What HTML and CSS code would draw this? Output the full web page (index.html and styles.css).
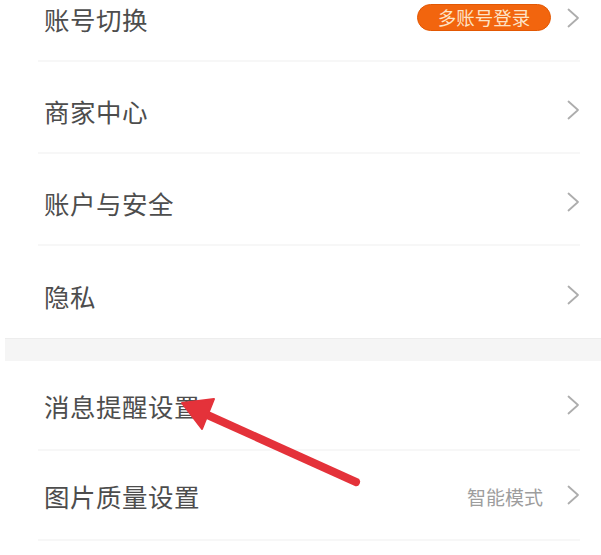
FILE: index.html
```html
<!DOCTYPE html>
<html lang="zh-CN">
<head>
<meta charset="utf-8">
<title>设置</title>
<link rel="stylesheet" href="styles.css">
</head>
<body>
<div class="page">
  <div class="settings">
    <div class="row">
      <span class="label">账号切换</span>
      <span class="badge">多账号登录</span>
      <svg class="chev" viewBox="0 0 13 20" width="13" height="20"><polyline points="1.5,1.5 11,10 1.5,18.5" /></svg>
    </div>
    <div class="row">
      <span class="label">商家中心</span>
      <svg class="chev" viewBox="0 0 13 20" width="13" height="20"><polyline points="1.5,1.5 11,10 1.5,18.5" /></svg>
    </div>
    <div class="row">
      <span class="label">账户与安全</span>
      <svg class="chev" viewBox="0 0 13 20" width="13" height="20"><polyline points="1.5,1.5 11,10 1.5,18.5" /></svg>
    </div>
    <div class="row row--last">
      <span class="label">隐私</span>
      <svg class="chev" viewBox="0 0 13 20" width="13" height="20"><polyline points="1.5,1.5 11,10 1.5,18.5" /></svg>
    </div>
  </div>
  <div class="band"></div>
  <div class="settings settings--second">
    <div class="row">
      <span class="label">消息提醒设置</span>
      <svg class="chev" viewBox="0 0 13 20" width="13" height="20"><polyline points="1.5,1.5 11,10 1.5,18.5" /></svg>
    </div>
    <div class="row">
      <span class="label">图片质量设置</span>
      <span class="value">智能模式</span>
      <svg class="chev" viewBox="0 0 13 20" width="13" height="20"><polyline points="1.5,1.5 11,10 1.5,18.5" /></svg>
    </div>
  </div>
  <svg class="arrow" viewBox="0 0 601 555" width="601" height="555">
    <line x1="356" y1="482" x2="203" y2="413" />
    <polygon points="182,403 214,399 202,429" />
  </svg>
</div>
</body>
</html>
```

FILE: styles.css
```css
html, body {
  margin: 0;
  padding: 0;
  background: #ffffff;
}

body {
  font-family: "Noto Sans CJK SC", "Noto Sans", sans-serif;
  overflow: hidden;
}

.page {
  position: relative;
  width: 601px;
  height: 555px;
  overflow: hidden;
}

.settings {
  margin-top: -30px;
}

.settings--second {
  margin-top: 0;
}

.row {
  display: flex;
  align-items: center;
  box-sizing: border-box;
  height: 92px;
  margin-left: 38px;
  margin-right: 21px;
  padding-left: 6px;
  padding-top: 7px;
  border-bottom: 2px solid #f7f7f7;
}

.settings--second .row {
  height: 90px;
  padding-top: 2px;
}

.row--last {
  border-bottom: none;
}

.label {
  flex: 1;
  font-size: 25.5px;
  color: #4d4d4d;
  letter-spacing: 0.5px;
  line-height: 1;
}

.badge {
  display: flex;
  align-items: center;
  justify-content: center;
  box-sizing: border-box;
  width: 134px;
  height: 27px;
  margin-top: -3px;
  margin-right: 16px;
  border-radius: 14px;
  background: #f2650e;
  border: 1px solid #e35803;
  color: #fde3c6;
  font-size: 18.5px;
  line-height: 1;
}

.value {
  margin-right: 24px;
  font-size: 19px;
  color: #9d9d9d;
  line-height: 1;
}

.chev {
  flex: none;
  margin-top: -2px;
}

.chev polyline {
  fill: none;
  stroke: #adadad;
  stroke-width: 1.8;
  stroke-linecap: round;
  stroke-linejoin: round;
}

.band {
  height: 22px;
  margin-left: 5px;
  background: #f5f5f5;
  border-top: 1px solid #ededed;
}

.arrow {
  position: absolute;
  left: 0;
  top: 0;
  pointer-events: none;
}

.arrow line {
  stroke: #e4323a;
  stroke-width: 8;
  stroke-linecap: round;
}

.arrow polygon {
  fill: #e4323a;
  stroke: #e4323a;
  stroke-width: 2;
  stroke-linejoin: round;
}
```
